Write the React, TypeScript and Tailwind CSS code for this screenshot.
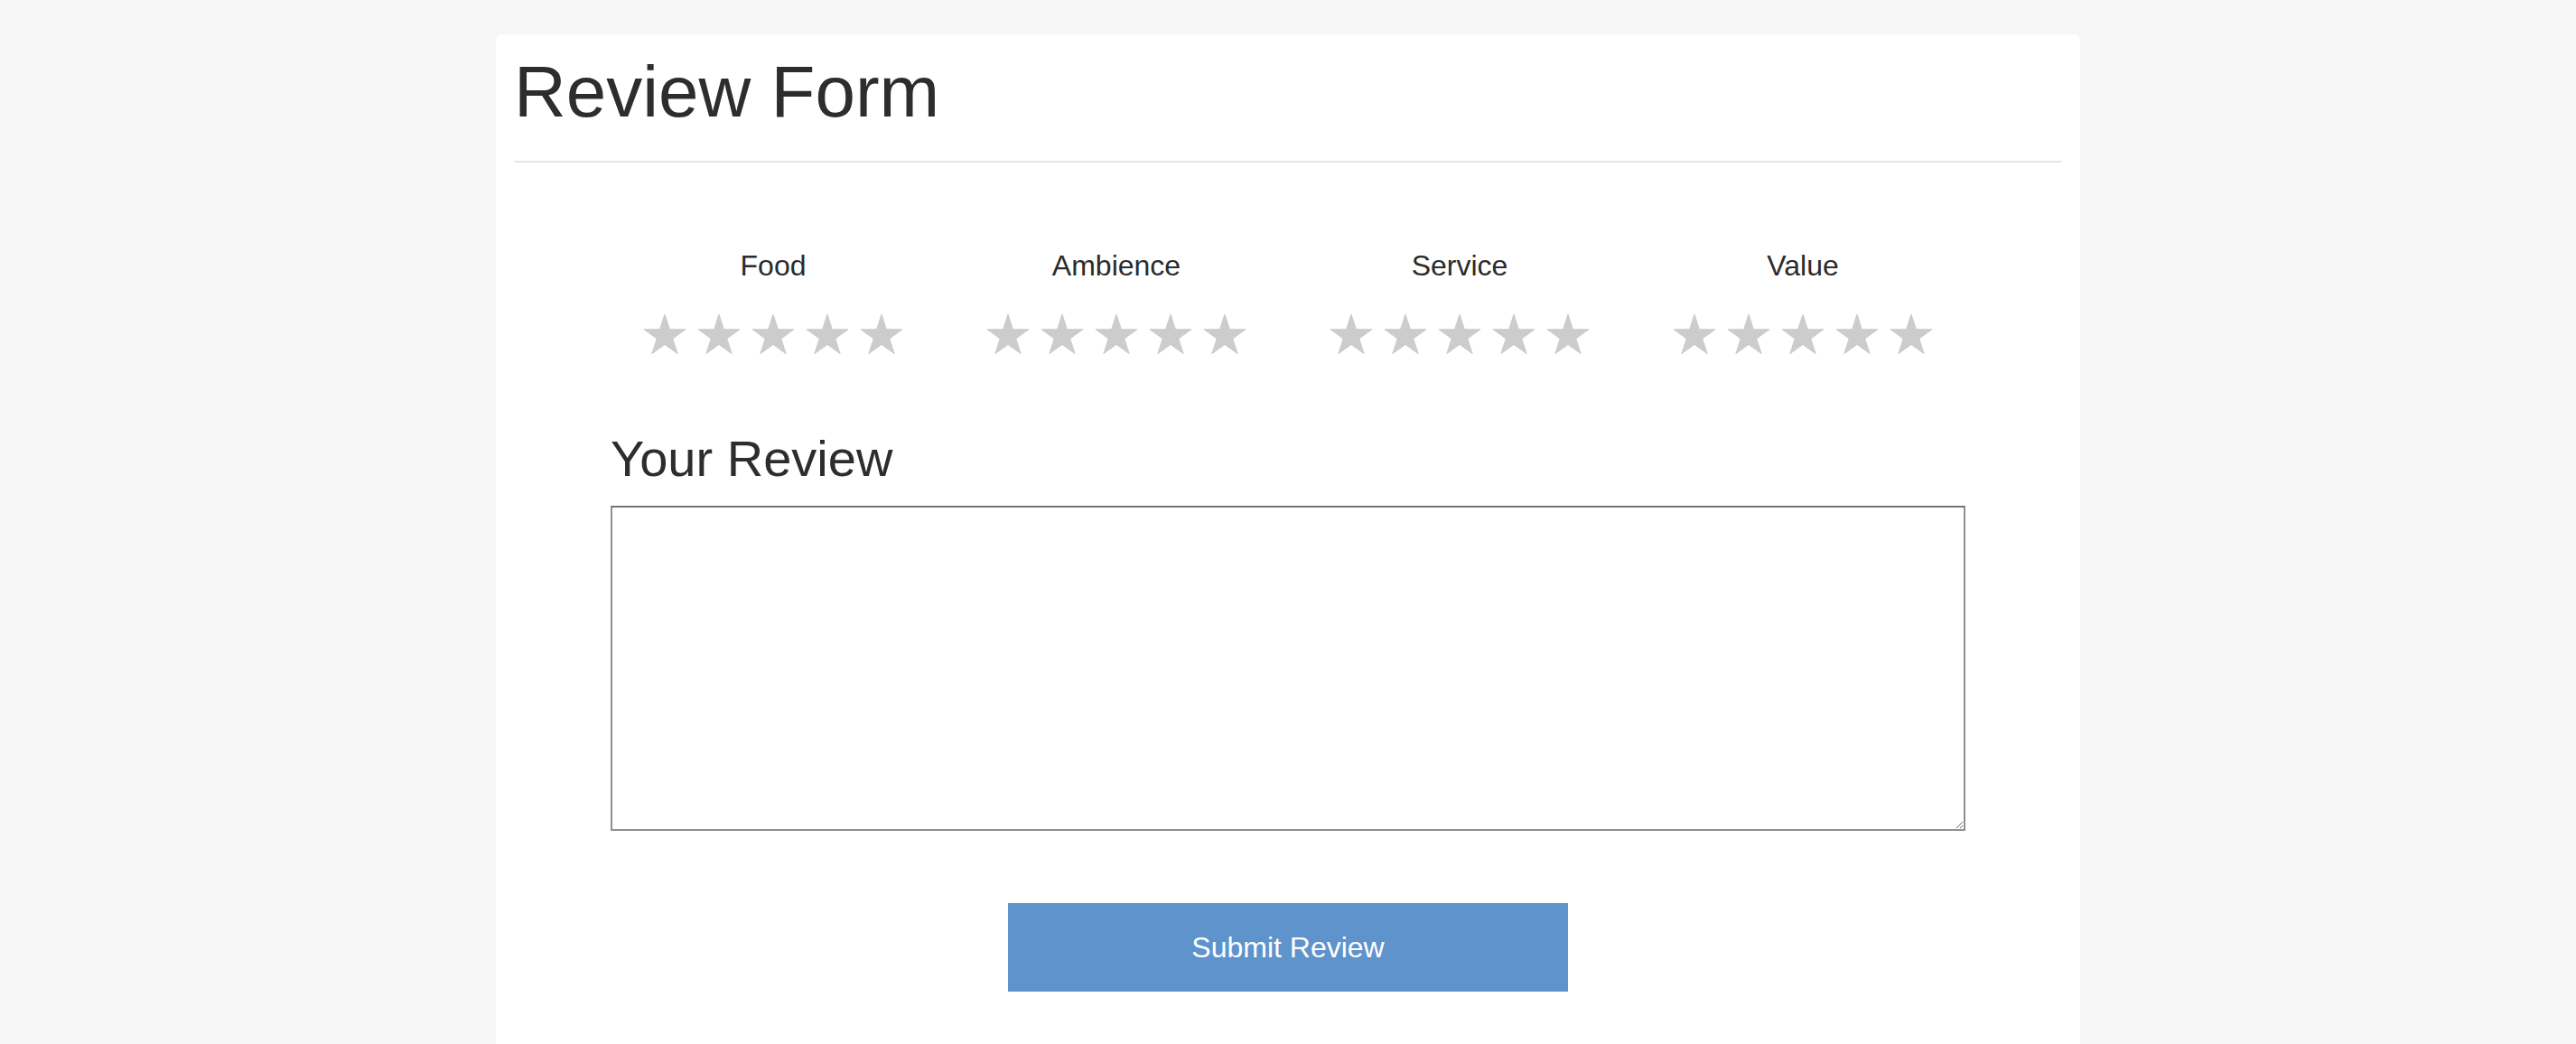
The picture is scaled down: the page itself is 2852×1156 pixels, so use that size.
import React from "react";

const categories = ["Food", "Ambience", "Service", "Value"];

function Star() {
  return (
    <svg width="46" height="44" viewBox="0 0 46 44" className="block">
      <polygon
        points="23,0 28.43,16.72 46,16.72 31.79,27.06 37.22,43.78 23,33.44 8.78,43.78 14.21,27.06 0,16.72 17.57,16.72"
        fill="#cccccc"
        stroke="#cccccc"
        strokeWidth="1"
        strokeLinejoin="round"
      />
    </svg>
  );
}

export default function App() {
  return (
    <div
      className="min-h-screen bg-[#f6f6f6] pt-[38px] text-[#2d2d2d]"
      style={{ fontFamily: '"Liberation Sans", Arial, Helvetica, sans-serif' }}
    >
      <div className="mx-auto w-[1754px] min-h-[1118px] rounded-t-[8px] bg-white px-[20px] pt-[18px]">
        <h1 className="m-0 text-[80px] font-normal leading-[92px]">Review Form</h1>
        <div className="mt-[30px] h-[2px] bg-[#e5e5e5]" />

        <div className="mt-[96px] flex justify-center">
          {categories.map((c) => (
            <div key={c} className="flex w-[380px] flex-col items-center">
              <div className="text-[32px] leading-[37px] text-[#2b2b2b]">{c}</div>
              <div className="mt-[35px] flex gap-[14px]">
                {[0, 1, 2, 3, 4].map((i) => (
                  <Star key={i} />
                ))}
              </div>
            </div>
          ))}
        </div>

        <div className="mx-auto mt-[84px] w-[1500px]">
          <h2 className="m-0 text-[56px] font-normal leading-[64px]">Your Review</h2>
          <textarea className="mt-[20px] block h-[360px] w-full border-2 border-[#8f8f8f] border-t-[#747474] bg-white" />
        </div>

        <button className="mx-auto mt-[80px] block h-[98px] w-[620px] bg-[#5e93cb] text-[32px] text-white">
          Submit Review
        </button>
      </div>
    </div>
  );
}
